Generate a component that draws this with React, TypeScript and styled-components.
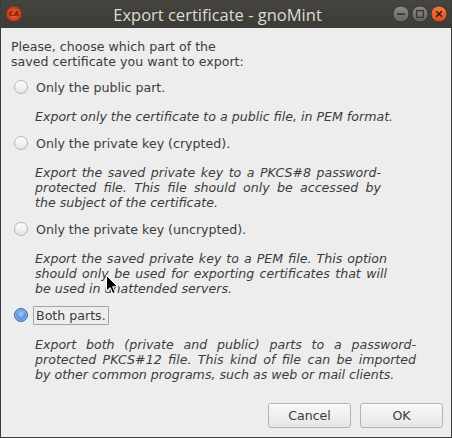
import React from "react";
import styled, { createGlobalStyle } from "styled-components";

const Global = createGlobalStyle`
  html, body { margin: 0; padding: 0; background: #ededed; }
  body { font-family: "DejaVu Sans", sans-serif; }
`;

const Window = styled.div`
  position: relative;
  width: 452px;
  height: 438px;
  box-sizing: border-box;
  display: flex;
  flex-direction: column;
  background: #ededed;
  border-left: 1px solid #3c3b37;
  border-right: 1px solid #3c3b37;
  border-bottom: 1px solid #3c3b37;
  overflow: hidden;
`;

const TitleBar = styled.div`
  height: 28px;
  flex: none;
  display: grid;
  grid-template-columns: 60px 1fr 60px;
  align-items: center;
  background: linear-gradient(#45443f, #3c3b37);
  margin: 0 -1px;
  padding: 0 4px 0 5px;
`;

const Title = styled.div`
  text-align: center;
  font-family: "Open Sans", "DejaVu Sans", sans-serif;
  font-size: 16.5px;
  color: #dfdbd2;
  padding-right: 18px;
  white-space: nowrap;
`;

const WinButtons = styled.div`
  display: flex;
  justify-content: flex-end;
  gap: 1px;
`;

const Content = styled.div`
  flex: 1;
  display: flex;
  flex-direction: column;
  padding: 10.5px 10px 0 10px;
  font-size: 12.6px;
  color: #3c3c3c;
`;

const Intro = styled.div`
  line-height: 15px;
  margin-bottom: 8.5px;
`;

const OptionRow = styled.div`
  display: flex;
  align-items: center;
  height: 20px;
  padding-left: 3px;
  gap: 5px;
`;

const Radio = styled.span<{ $checked?: boolean }>`
  width: 14px;
  height: 14px;
  box-sizing: border-box;
  border-radius: 50%;
  flex: none;
  border: 1px solid ${(p) => (p.$checked ? "#3c6aa5" : "#b4b4b0")};
  background: ${(p) =>
    p.$checked
      ? "radial-gradient(circle at 50% 40%, #a9cdf3 0%, #5e9be0 45%, #3e78c4 100%)"
      : "linear-gradient(#fdfdfd, #e4e4e2)"};
  box-shadow: ${(p) =>
    p.$checked ? "inset 0 0 0 1px rgba(255,255,255,0.35)" : "inset 0 1px 0 #fff"};
`;

const Label = styled.span<{ $focused?: boolean }>`
  line-height: 15px;
  padding: 1px 2px 1px 2px;
  border: 1px solid ${(p) => (p.$focused ? "#a3a39f" : "transparent")};
  border-radius: 1px;
  color: #3c3c3c;
  white-space: nowrap;
`;

const Desc = styled.div<{ $width: number }>`
  width: ${(p) => p.$width}px;
  margin: 11.5px 0 9.5px 24px;
  font-style: oblique;
  line-height: 15px;
  color: #3c3c3c;
`;

const Line = styled.span<{ $justify?: boolean }>`
  display: block;
  white-space: nowrap;
  text-align: ${(p) => (p.$justify ? "justify" : "left")};
  text-align-last: ${(p) => (p.$justify ? "justify" : "left")};
  ${(p) => (p.$justify ? "white-space: normal;" : "")}
`;

const ButtonRow = styled.div`
  display: flex;
  justify-content: flex-end;
  gap: 9px;
  padding: 0 8px 9px 0;
`;

const Button = styled.button`
  width: 83px;
  height: 25px;
  box-sizing: border-box;
  border: 1px solid #b3b3b0;
  border-radius: 3px;
  background: linear-gradient(#f7f7f6, #e7e7e5);
  font-family: "DejaVu Sans", sans-serif;
  font-size: 12.6px;
  color: #3c3c3c;
  padding: 0;
  box-shadow: inset 0 1px 0 #fff;
`;

const Cursor = styled.svg`
  position: absolute;
  left: 105px;
  top: 275px;
`;

const AppIcon = () => (
  <svg width="18" height="18" viewBox="0 0 18 18">
    <path
      d="M9 1 L10.6 2.3 L12.6 1.9 L13.5 3.7 L15.5 4.3 L15.4 6.4 L16.8 8 L15.7 9.8 L16.2 11.8 L14.4 12.8 L13.9 14.8 L11.9 14.9 L10.6 16.5 L9 15.4 L7.1 16.5 L5.9 14.9 L3.9 14.8 L3.4 12.8 L1.6 11.8 L2.2 9.8 L1.1 8 L2.5 6.4 L2.4 4.3 L4.4 3.7 L5.3 1.9 L7.3 2.3 Z"
      fill="#d8431f"
      stroke="#a42e12"
      strokeWidth="0.6"
    />
    <circle cx="9" cy="8.8" r="5" fill="#e8562a" stroke="#b93a18" strokeWidth="0.6" />
    <text
      x="9"
      y="11.2"
      textAnchor="middle"
      fontFamily="DejaVu Sans"
      fontStyle="italic"
      fontWeight="bold"
      fontSize="6.5"
      fill="#6d1606"
    >
      CA
    </text>
  </svg>
);

const WinBtn = ({ kind }: { kind: "min" | "max" | "close" }) => {
  const close = kind === "close";
  return (
    <svg width="18" height="18" viewBox="0 0 18 18">
      <defs>
        <linearGradient id={`g-${kind}`} x1="0" y1="0" x2="0" y2="1">
          <stop offset="0" stopColor={close ? "#f47a4c" : "#8c8b86"} />
          <stop offset="1" stopColor={close ? "#dd4814" : "#64635e"} />
        </linearGradient>
      </defs>
      <circle cx="9" cy="9" r="8" fill={`url(#g-${kind})`} stroke="#2e2d2a" strokeWidth="0.8" />
      {kind === "min" && <rect x="5" y="8.2" width="8" height="1.8" fill="#3a3935" />}
      {kind === "max" && (
        <rect x="5.6" y="5.6" width="6.8" height="6.8" fill="none" stroke="#3a3935" strokeWidth="1.4" />
      )}
      {close && (
        <path d="M6.2 6.2 L11.8 11.8 M11.8 6.2 L6.2 11.8" stroke="#3a1a0c" strokeWidth="1.6" />
      )}
    </svg>
  );
};

type Opt = {
  label: string;
  lines: string[];
  width: number;
  checked?: boolean;
};

const options: Opt[] = [
  {
    label: "Only the public part.",
    lines: ["Export only the certificate to a public file, in PEM format."],
    width: 370,
  },
  {
    label: "Only the private key (crypted).",
    lines: [
      "Export the saved private key to a PKCS#8 password-",
      "protected file. This file should only be accessed by",
      "the subject of the certificate.",
    ],
    width: 346,
  },
  {
    label: "Only the private key (uncrypted).",
    lines: [
      "Export the saved private key to a PEM file. This option",
      "should only be used for exporting certificates that will",
      "be used in unattended servers.",
    ],
    width: 352,
  },
  {
    label: "Both parts.",
    lines: [
      "Export both (private and public) parts to a password-",
      "protected PKCS#12 file. This kind of file can be imported",
      "by other common programs, such as web or mail clients.",
    ],
    width: 381,
    checked: true,
  },
];

export default function App() {
  return (
    <>
      <Global />
      <Window>
        <TitleBar>
          <AppIcon />
          <Title>Export certificate - gnoMint</Title>
          <WinButtons>
            <WinBtn kind="min" />
            <WinBtn kind="max" />
            <WinBtn kind="close" />
          </WinButtons>
        </TitleBar>
        <Content>
          <Intro>
            Please, choose which part of the
            <br />
            saved certificate you want to export:
          </Intro>
          {options.map((o) => (
            <React.Fragment key={o.label}>
              <OptionRow>
                <Radio $checked={o.checked} />
                <Label $focused={o.checked}>{o.label}</Label>
              </OptionRow>
              <Desc $width={o.width}>
                {o.lines.map((l, i) => (
                  <Line key={i} $justify={o.lines.length > 1 && i < o.lines.length - 1}>
                    {l}
                  </Line>
                ))}
              </Desc>
            </React.Fragment>
          ))}
        </Content>
        <ButtonRow>
          <Button>Cancel</Button>
          <Button>OK</Button>
        </ButtonRow>
        <Cursor width="13" height="20" viewBox="0 0 13 20">
          <path
            d="M0.5 0.5 L0.5 16 L4.2 12.6 L6.8 18.6 L9.2 17.6 L6.7 11.8 L11.6 11.6 Z"
            fill="#000"
            stroke="#fff"
            strokeWidth="1"
            strokeLinejoin="round"
          />
        </Cursor>
      </Window>
    </>
  );
}
